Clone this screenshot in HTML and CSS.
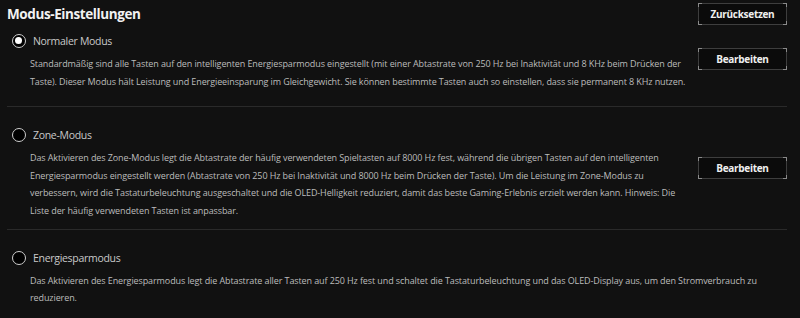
FILE: index.html
```html
<!DOCTYPE html>
<html lang="de">
<head>
<meta charset="utf-8">
<title>Modus-Einstellungen</title>
<link rel="stylesheet" href="styles.css">
</head>
<body>
<div class="page">
  <header class="header">
    <h1 class="title">Modus-Einstellungen</h1>
    <button class="btn" type="button">Zurücksetzen</button>
  </header>

  <section class="mode mode-first">
    <div class="mode-main">
      <div class="radio-row">
        <span class="radio radio-checked"></span>
        <span class="mode-name">Normaler Modus</span>
      </div>
      <p class="mode-desc">Standardmäßig sind alle Tasten auf den intelligenten Energiesparmodus eingestellt (mit einer Abtastrate von 250 Hz bei Inaktivität und 8 KHz beim Drücken der Taste). Dieser Modus hält Leistung und Energieeinsparung im Gleichgewicht. Sie können bestimmte Tasten auch so einstellen, dass sie permanent 8 KHz nutzen.</p>
    </div>
    <button class="btn btn-first" type="button">Bearbeiten</button>
  </section>

  <section class="mode mode-zone">
    <div class="mode-main">
      <div class="radio-row">
        <span class="radio"></span>
        <span class="mode-name">Zone-Modus</span>
      </div>
      <p class="mode-desc">Das Aktivieren des Zone-Modus legt die Abtastrate der häufig verwendeten Spieltasten auf 8000 Hz fest, während die übrigen Tasten auf den intelligenten Energiesparmodus eingestellt werden (Abtastrate von 250 Hz bei Inaktivität und 8000 Hz beim Drücken der Taste). Um die Leistung im Zone-Modus zu verbessern, wird die Tastaturbeleuchtung ausgeschaltet und die OLED-Helligkeit reduziert, damit das beste Gaming-Erlebnis erzielt werden kann. Hinweis: Die Liste der häufig verwendeten Tasten ist anpassbar.</p>
    </div>
    <button class="btn btn-zone" type="button">Bearbeiten</button>
  </section>

  <section class="mode mode-last">
    <div class="mode-main">
      <div class="radio-row">
        <span class="radio"></span>
        <span class="mode-name">Energiesparmodus</span>
      </div>
      <p class="mode-desc">Das Aktivieren des Energiesparmodus legt die Abtastrate aller Tasten auf 250 Hz fest und schaltet die Tastaturbeleuchtung und das OLED-Display aus, um den Stromverbrauch zu reduzieren.</p>
    </div>
  </section>
</div>
</body>
</html>
```

FILE: styles.css
```css
* { box-sizing: border-box; }

html, body {
  margin: 0;
  background: #111111;
}

body {
  font-family: "Open Sans", "Noto Sans", sans-serif;
  color: #c8c8c8;
  overflow: hidden;
}

.page {
  padding: 0 13px 0 7px;
}

.header {
  display: flex;
  justify-content: space-between;
  align-items: flex-start;
  padding-top: 3px;
  height: 28px;
}

.title {
  margin: 0;
  font-size: 13.5px;
  letter-spacing: -0.4px;
  line-height: 22px;
  font-weight: 700;
  color: #f2f2f2;
}

.btn {
  position: relative;
  width: 89px;
  height: 22px;
  padding: 0;
  border: 1px solid #3e3e3e;
  background: #0b0b0b;
  color: #f0f0f0;
  font-family: "Open Sans", "Noto Sans", sans-serif;
  font-size: 10px;
  letter-spacing: -0.3px;
  font-weight: 700;
  flex: none;
}

.btn::before {
  content: "";
  position: absolute;
  inset: -1px;
  pointer-events: none;
  background:
    linear-gradient(#8a8a8a, #8a8a8a) left top / 4px 1px no-repeat,
    linear-gradient(#8a8a8a, #8a8a8a) left top / 1px 4px no-repeat,
    linear-gradient(#8a8a8a, #8a8a8a) right top / 4px 1px no-repeat,
    linear-gradient(#8a8a8a, #8a8a8a) right top / 1px 4px no-repeat,
    linear-gradient(#8a8a8a, #8a8a8a) left bottom / 4px 1px no-repeat,
    linear-gradient(#8a8a8a, #8a8a8a) left bottom / 1px 4px no-repeat,
    linear-gradient(#8a8a8a, #8a8a8a) right bottom / 4px 1px no-repeat,
    linear-gradient(#8a8a8a, #8a8a8a) right bottom / 1px 4px no-repeat;
}

.mode {
  display: flex;
  align-items: flex-start;
  gap: 10px;
  border-bottom: 1px solid #2a2a2a;
}

.mode-first {
  padding: 5px 0 15.5px;
}

.mode-zone {
  padding: 20px 0 9px;
}

.mode-last {
  padding: 20px 0 0;
  border-bottom: none;
}

.mode-main {
  flex: 1;
  min-width: 0;
}

.radio-row {
  display: flex;
  align-items: center;
  gap: 7px;
  height: 16px;
  padding-left: 5px;
}

.radio {
  width: 14px;
  height: 14px;
  border-radius: 50%;
  border: 1.5px solid #cfcfcf;
  background: #000;
  flex: none;
  position: relative;
}

.radio-checked::after {
  content: "";
  position: absolute;
  left: 2px;
  top: 2px;
  width: 7px;
  height: 7px;
  border-radius: 50%;
  background: #ffffff;
}

.mode-name {
  font-size: 10.5px;
  letter-spacing: -0.3px;
  color: #c9c9c9;
}

.mode-desc {
  margin: 6px 0 0 23px;
  font-size: 9px;
  letter-spacing: -0.1px;
  line-height: 17.7px;
  color: #bcbcbc;
}

.btn-first {
  margin-top: 15px;
}

.btn-zone {
  margin-top: 30px;
}
```
